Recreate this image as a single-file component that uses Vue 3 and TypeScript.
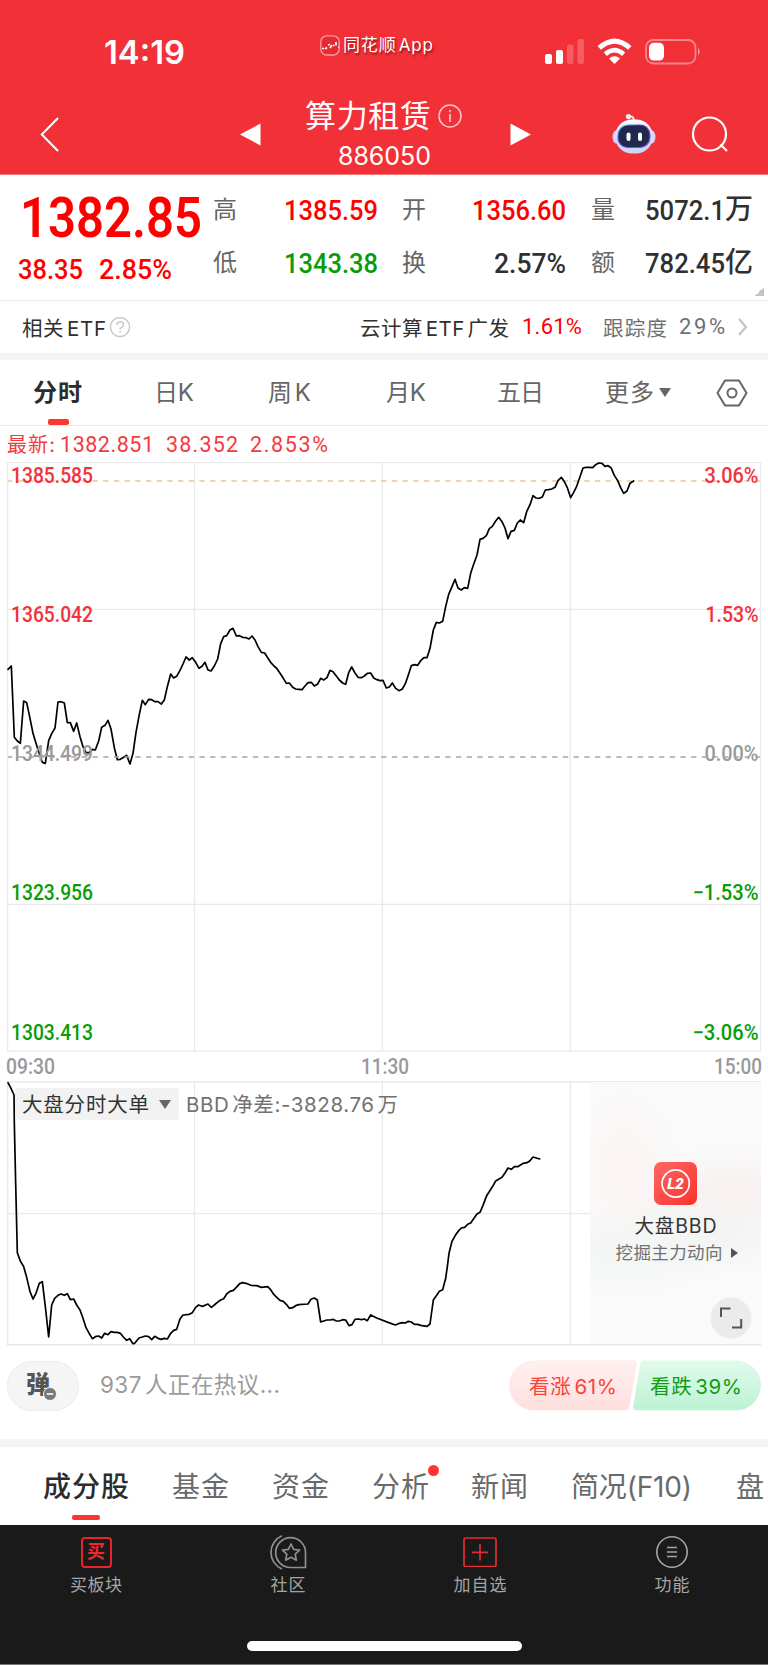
<script setup lang="ts">
type Point = [number, number]

/* Spreads a label's letters so that it takes up the given width in pixels. */
const vFit = {
  mounted(el: HTMLElement, binding: { value: number }) {
    const count = Array.from(el.textContent ?? '').length
    if (count < 2) return
    const natural = el.getBoundingClientRect().width
    const gap = (binding.value - natural) / (count - 1)
    el.style.letterSpacing = `${gap}px`
    el.style.marginRight = `${-gap}px`
  },
}

/* Condenses the glyphs of a figure to the given width in pixels. */
const vCondense = {
  mounted(el: HTMLElement, binding: { value: number }) {
    const natural = el.getBoundingClientRect().width
    el.style.transform = `scaleX(${binding.value / natural})`
    el.style.marginRight = `${binding.value - natural}px`
  },
}

/* Samples are stored as flat x,y lists on a grid three times finer than the plot. */
const toPoints = (flat: number[], dy: number): string => {
  const out: Point[] = []
  for (let i = 0; i < flat.length; i += 2) out.push([flat[i] / 3 - 7, flat[i + 1] / 3 + dy])
  return out.map(([x, y]) => `${x.toFixed(2)},${y.toFixed(2)}`).join(' ')
}

const price: number[] = [
  24,643,34,633,43,847,52,858,61,865,71,738,80,743,90,790,99,835,108,865,117,893,127,922,136,925,146,857,155,836,165,819,
  174,741,183,740,193,744,202,803,211,803,221,829,230,804,240,845,249,875,258,893,268,893,277,883,286,885,296,858,305,817,
  315,811,324,796,333,822,343,878,352,914,361,913,371,907,380,901,390,927,399,895,408,832,418,778,427,736,436,749,446,733,
  455,734,465,740,474,740,484,747,493,735,502,695,512,657,521,669,530,664,540,646,549,627,558,606,568,615,577,608,587,622,
  597,640,606,634,615,622,624,645,633,648,643,633,653,612,662,566,671,545,680,542,690,525,699,520,709,543,718,542,728,547,
  738,548,747,552,756,543,765,555,774,575,784,592,794,594,803,608,812,622,822,633,831,641,840,655,850,670,859,685,868,684,
  878,697,887,702,896,703,906,704,915,693,924,683,934,682,943,693,953,687,962,670,971,675,981,668,990,646,999,650,1009,663,
  1018,675,1028,684,1037,688,1046,653,1055,636,1065,654,1074,667,1084,668,1093,663,1102,655,1112,654,1121,669,1131,674,
  1140,677,1149,676,1159,699,1168,696,1177,684,1187,700,1197,707,1207,702,1216,686,1225,660,1234,632,1244,629,1253,631,
  1262,617,1272,608,1281,608,1290,580,1300,525,1309,502,1318,504,1328,499,1337,455,1346,418,1356,395,1365,373,1374,399,
  1384,405,1393,398,1403,400,1412,355,1421,328,1431,300,1440,253,1449,250,1459,242,1468,221,1477,214,1487,198,1496,187,
  1506,200,1515,219,1524,251,1533,229,1543,226,1552,204,1561,195,1571,203,1580,170,1590,149,1599,122,1608,129,1618,130,
  1627,126,1636,105,1646,104,1655,102,1665,97,1674,77,1684,67,1693,80,1702,98,1712,128,1721,112,1730,94,1740,65,1749,39,
  1758,37,1768,37,1778,38,1787,29,1796,24,1806,25,1815,34,1824,32,1833,38,1843,61,1853,77,1862,98,1871,115,1881,108,
  1890,85,1901,78,
]

const bigOrders: number[] = [
  24,8,33,25,42,45,43,130,47,310,52,518,61,543,71,560,80,592,90,635,99,657,108,640,118,610,127,605,136,680,146,771,155,675,
  164,655,174,646,183,642,193,646,202,641,211,659,221,657,230,675,240,690,249,715,258,743,268,761,277,776,286,770,296,768,
  305,774,314,760,324,764,333,755,343,757,352,757,361,760,370,771,380,781,389,776,399,791,404,790,417,774,427,771,436,768,
  446,770,455,779,464,769,474,775,483,778,493,775,502,777,512,760,521,751,530,748,540,717,549,705,568,703,577,698,587,682,
  596,675,606,679,615,676,624,672,634,682,643,675,652,667,662,660,671,656,680,642,690,634,700,631,709,622,719,611,728,608,
  738,610,753,616,770,617,784,622,803,620,812,629,822,644,831,653,840,661,850,664,859,673,868,685,878,683,887,677,896,674,
  924,672,933,658,943,654,952,660,962,726,971,723,981,720,990,720,999,718,1009,723,1018,723,1028,719,1037,720,1047,737,
  1056,734,1065,718,1075,717,1084,719,1093,717,1102,722,1112,705,1130,714,1140,718,1164,727,1186,735,1195,731,1207,728,
  1216,729,1225,724,1234,726,1243,733,1253,733,1262,736,1281,739,1290,732,1300,660,1309,647,1318,634,1328,629,1337,595,
  1342,560,1347,520,1356,484,1366,466,1376,452,1384,444,1394,442,1403,433,1412,429,1422,415,1431,402,1440,397,1449,376,
  1460,347,1469,333,1478,319,1487,303,1506,292,1515,279,1524,264,1534,268,1543,260,1553,260,1570,250,1581,248,1590,242,
  1599,231,1619,237,
]

const pricePoints = toPoints(price, -7)
const orderPoints = toPoints(bigOrders, -1)

const axis = [
  { value: '1385.585', pct: '3.06%', y: 20.5, w: 54, tone: 'up' },
  { value: '1365.042', pct: '1.53%', y: 159.9, w: 53, tone: 'up' },
  { value: '1344.499', pct: '0.00%', y: 299.1, w: 54, tone: 'flat' },
  { value: '1323.956', pct: '−1.53%', y: 438.3, w: 66, tone: 'down' },
  { value: '1303.413', pct: '−3.06%', y: 577.5, w: 66, tone: 'down' },
]

const periods = [
  { name: '日K', w: 40 },
  { name: '周K', w: 43 },
  { name: '月K', w: 40 },
  { name: '五日', w: 47 },
]
</script>

<template>
  <div class="screen">
    <header class="top">
      <div class="status">
        <span class="clock" v-condense="81">14:19</span>
        <div class="source">
          <svg width="20" height="21" viewBox="0 0 20 21">
            <rect x=".8" y=".8" width="18.4" height="19.2" rx="6" fill="#e22c33" stroke="#ff9a9d" stroke-width="1.3" />
            <path d="M2 13.500h2M5 14l2-1.500M8 10l2-.500M10 13l2-3M13 10.500h1.500M16 7v3.500M18 12h1" stroke="#fff" stroke-width="1.700" fill="none" />
          </svg>
          <span v-fit="90">同花顺 App</span>
        </div>
        <svg class="signals" width="158" height="28" viewBox="0 0 158 28" fill="#fff">
          <rect x="1" y="16" width="7" height="10" rx="2" />
          <rect x="12" y="12" width="7" height="14" rx="2" />
          <rect x="23" y="6.500" width="6.500" height="19.500" rx="2" opacity=".22" />
          <rect x="33.500" y="1" width="6.500" height="25" rx="2" opacity=".22" />
          <g fill="none" stroke="#fff" stroke-width="5">
            <path d="M55.200 9.900Q70.500-3.800 85.800 9.900" />
            <path d="M61.300 16.200Q70.500 8.200 79.700 16.200" stroke-width="4.600" />
          </g>
          <path d="M65 20.500Q70.500 16 76 20.500L70.500 26Z" />
          <rect x="102" y="2" width="49.500" height="23.500" rx="7.500" fill="none" stroke="#fff" stroke-opacity=".42" stroke-width="1.800" />
          <rect x="105" y="4.800" width="15" height="17.800" rx="5" />
          <path d="M154 10q3.500 3.700 0 7.500z" opacity=".5" />
        </svg>
      </div>
      <div class="nav">
        <svg width="20" height="37" viewBox="0 0 20 37"><path d="M18 2L1.800 18.500l16.200 16.500" fill="none" stroke="#fff" stroke-width="2" /></svg>
        <svg width="21" height="23" viewBox="0 0 21 23"><path d="M20.500 .5v22L0 11.500z" fill="#fff" /></svg>
        <div class="title">
          <div class="name">
            <span v-fit="126">算力租赁</span>
            <svg width="24" height="24" viewBox="0 0 24 24" opacity=".72">
              <circle cx="12" cy="12" r="11" fill="none" stroke="#fff" stroke-width="1.500" />
              <path d="M12 10v8M12 6v2.200" stroke="#fff" stroke-width="1.700" />
            </svg>
          </div>
          <span class="code" v-fit="93">886050</span>
        </div>
        <svg width="21" height="23" viewBox="0 0 21 23"><path d="M.5 .5v22L21 11.500z" fill="#fff" /></svg>
        <svg class="robot" width="44" height="41" viewBox="0 0 44 41">
          <defs>
            <linearGradient id="shell" x1="0" y1="0" x2="0" y2="1"><stop offset="0" stop-color="#fff" /><stop offset=".55" stop-color="#dcd9fa" /><stop offset="1" stop-color="#cbd5f2" /></linearGradient>
            <linearGradient id="rim" x1="0" y1="0" x2="1" y2="1"><stop offset="0" stop-color="#60d4f4" /><stop offset=".4" stop-color="#5635b8" /><stop offset="1" stop-color="#8c68f0" /></linearGradient>
          </defs>
          <path d="M17 3.500q5-1 5 5" fill="none" stroke="#f3e9fa" stroke-width="1.800" />
          <circle cx="16.500" cy="3.600" r="2.700" fill="#f4eafa" />
          <ellipse cx="4" cy="24" rx="3.500" ry="6.500" fill="#d6d0f2" />
          <ellipse cx="40" cy="24" rx="3.500" ry="6.500" fill="#d6d0f2" />
          <rect x="3" y="6.500" width="38" height="34" rx="17" fill="url(#shell)" />
          <rect x="6" y="12" width="32" height="22.500" rx="10" fill="#20294d" stroke="url(#rim)" stroke-width="1.200" />
          <rect x="14.500" y="19.500" width="4" height="8.500" rx="2" fill="#fff" />
          <rect x="26" y="19.500" width="4" height="8.500" rx="2" fill="#fff" />
        </svg>
        <svg width="38" height="38" viewBox="0 0 38 38"><circle cx="18.500" cy="18" r="16.500" fill="none" stroke="#fff" stroke-width="2.200" /><path d="M29.500 28.500l6.500 6.500" stroke="#fff" stroke-width="2.300" /></svg>
      </div>
    </header>

    <section class="quote">
      <div class="last">
        <div class="big"><span v-condense="182">1382.85</span></div>
        <div class="change"><span v-condense="65">38.35</span><span v-condense="73">2.85%</span></div>
      </div>
      <div class="stats">
        <span class="label">高</span><div class="num up"><span v-condense="94">1385.59</span></div>
        <span class="label">开</span><div class="num up"><span v-condense="94">1356.60</span></div>
        <span class="label">量</span><div class="num"><span v-condense="80">5072.1</span><i>万</i></div>
        <span class="label">低</span><div class="num down"><span v-condense="94">1343.38</span></div>
        <span class="label">换</span><div class="num"><span v-condense="72">2.57%</span></div>
        <span class="label">额</span><div class="num"><span v-condense="80">782.45</span><i>亿</i></div>
      </div>
      <i class="corner"></i>
    </section>

    <section class="etf">
      <span v-fit="84">相关 ETF</span>
      <svg width="22" height="22" viewBox="0 0 22 22" fill="none" stroke="#c9c9c9" stroke-width="1.500">
        <circle cx="11" cy="11" r="9.600" /><path d="M8 9q0-3.200 3.200-3.200t3.200 2.900q0 1.800-1.800 2.700-1.500.8-1.500 2.200M11.100 15v1.700" />
      </svg>
      <div class="fund">
        <span v-fit="149">云计算 ETF 广发</span>
        <span class="rise digits" v-fit="60">1.61%</span>
        <span class="grey" v-fit="64">跟踪度</span>
        <span class="grey pct digits" v-fit="46">29%</span>
        <svg width="10" height="18" viewBox="0 0 10 18"><path d="M1 1l7 8-7 8" fill="none" stroke="#c4c4c4" stroke-width="2.200" /></svg>
      </div>
    </section>

    <nav class="periods">
      <div class="active"><span v-fit="49">分时</span></div>
      <div v-for="p in periods" :key="p.name"><span v-fit="p.w">{{ p.name }}</span></div>
      <div class="more"><span v-fit="49">更多</span><i class="caret"></i></div>
      <svg width="32" height="28" viewBox="0 0 32 28" fill="none" stroke="#666" stroke-width="2"><path d="M9 1.500h14L30.500 14 23 26.500H9L1.500 14z" stroke-linejoin="round" /><circle cx="16" cy="14" r="4.500" /></svg>
    </nav>

    <div class="latest">
      <span class="caption" v-fit="48">最新:</span><span v-fit="94">1382.851</span><span v-fit="72">38.352</span><span v-fit="78">2.853%</span>
    </div>

    <svg class="plot" width="754" height="590" viewBox="0 0 754 590">
      <g fill="none" stroke="#e9e9e9" stroke-width="1.300">
        <rect x=".6" y=".6" width="753" height="588.500" />
        <path d="M187.500 0v589M375.300 0v589M563.300 0v589M0 147.400h753M0 442.300h753" />
      </g>
      <path d="M1 19h752" stroke="#e8c79a" stroke-dasharray="5.300 5.390" stroke-dashoffset="1" stroke-width="1.300" />
      <polyline :points="pricePoints" class="line" />
      <g v-for="a in axis" :key="a.value" :class="['axis', a.tone]">
        <text x="4" :y="a.y" textLength="82" lengthAdjust="spacingAndGlyphs">{{ a.value }}</text>
        <text :x="751.500 - a.w" :y="a.y" :textLength="a.w" lengthAdjust="spacingAndGlyphs">{{ a.pct }}</text>
      </g>
      <path d="M1 295h752" stroke="#a5a5a5" stroke-dasharray="5.300 5.390" stroke-dashoffset="1" stroke-width="1.500" />
    </svg>

    <div class="times"><span v-condense="49">09:30</span><span v-condense="48">11:30</span><span v-condense="48">15:00</span></div>

    <section class="orders">
      <svg class="orders-plot" width="754" height="265" viewBox="0 0 754 265">
        <g fill="none" stroke="#e9e9e9" stroke-width="1.300">
          <rect x=".6" y=".8" width="753" height="263" stroke-width="1.600" />
          <path d="M187.500 0v264M375.300 0v264M563.300 0v264M0 132.600h583" />
        </g>
        <polyline :points="orderPoints" class="line" />
      </svg>
      <div class="orders-body">
        <div class="legend">
          <div class="chip"><span v-fit="127">大盘分时大单</span><i class="caret"></i></div>
          <span class="net" v-fit="212">BBD 净差:-3828.76 万</span>
        </div>
        <aside class="promo">
          <svg class="badge" width="43" height="43" viewBox="0 0 43 43">
            <defs><linearGradient id="l2" x1="0" y1="0" x2="1" y2="1"><stop offset="0" stop-color="#ff6865" /><stop offset="1" stop-color="#fa322d" /></linearGradient></defs>
            <rect width="43" height="43" rx="7" fill="url(#l2)" />
            <circle cx="21.700" cy="21.500" r="13.600" fill="none" stroke="#fff" stroke-width="1.700" />
            <text x="13.200" y="27" textLength="16.500" lengthAdjust="spacingAndGlyphs" class="l2">L2</text>
          </svg>
          <span class="promo-name" v-fit="82">大盘BBD</span>
          <div class="promo-link"><span v-fit="107">挖掘主力动向</span><i></i></div>
          <svg class="expand" width="42" height="42" viewBox="0 0 42 42"><circle cx="21" cy="21" r="20.500" fill="#ebebeb" /><path d="M11 20v-8.500h9.500M22 30.500h9.200V22" fill="none" stroke="#555" stroke-width="2" /></svg>
        </aside>
      </div>
    </section>

    <section class="talk">
      <div class="danmu">
        <b>弹</b>
        <svg width="14" height="14" viewBox="0 0 14 14"><circle cx="7" cy="7" r="6.500" fill="#777" stroke="#f5f5f5" /><path d="M3.800 7h6.400" stroke="#fff" stroke-width="1.600" /></svg>
      </div>
      <span class="count" v-fit="180">937 人正在热议...</span>
      <div class="votes">
        <svg width="252" height="51" viewBox="0 0 252 51">
          <defs>
            <linearGradient id="bull" x1="0" y1="0" x2="0" y2="1"><stop offset="0" stop-color="#fff0ef" /><stop offset="1" stop-color="#fedfdd" /></linearGradient>
            <linearGradient id="bear" x1="0" y1="0" x2="0" y2="1"><stop offset="0" stop-color="#e1faec" /><stop offset="1" stop-color="#bdf2d4" /></linearGradient>
          </defs>
          <path d="M25 .5H125q3.500 0 3 3.500L120.500 46q-.8 4.300-4.500 4.300H25A24.900 24.900 0 0 1 25 .5z" fill="url(#bull)" />
          <path d="M136 .5H227A24.900 24.900 0 0 1 227 50.300H127.500q-4 0-3.300-4L131 5q.8-4.500 5-4.500z" fill="url(#bear)" />
        </svg>
        <div class="vote-text"><span class="bull" v-fit="88">看涨 61%</span><span class="bear" v-fit="92">看跌 39%</span></div>
      </div>
    </section>

    <nav class="sections">
      <div class="active"><span v-fit="86">成分股</span></div>
      <div><span v-fit="57">基金</span></div>
      <div><span v-fit="57">资金</span></div>
      <div class="dot"><span v-fit="57">分析</span></div>
      <div><span v-fit="57">新闻</span></div>
      <div><span v-fit="121">简况(F10)</span></div>
      <div>盘</div>
    </nav>

    <footer class="bottom">
      <div class="actions">
        <div>
          <div class="buy">买</div>
          <span v-fit="52">买板块</span>
        </div>
        <div>
          <svg width="37" height="35" viewBox="0 0 37 35" fill="none" stroke="#8f8f8f" stroke-width="1.700">
            <path d="M12 .8A18 18 0 0 0 12 34" />
            <path d="M35.500 32.500H21A14.900 14.900 0 1 1 35.500 17.600z" />
            <path d="M21 9l2.600 5.400 6 .7-4.400 4.100 1.100 6L21 22.300l-5.300 2.900 1.100-6-4.400-4.100 6-.7z" stroke-linejoin="round" />
          </svg>
          <span v-fit="35">社区</span>
        </div>
        <div>
          <svg width="34" height="30" viewBox="0 0 34 30" fill="none" stroke="#e52d30" stroke-width="1.700"><rect x="1" y="1" width="32" height="28.500" rx="1.500" /><path d="M17 7v16.500M9 15.300h16" /></svg>
          <span v-fit="53">加自选</span>
        </div>
        <div>
          <svg width="32" height="32" viewBox="0 0 32 32" fill="none" stroke="#a5a5a5" stroke-width="1.600"><circle cx="16" cy="16" r="15.200" /><path d="M11 11.500h10M11 16h10M11 20.500h10" /></svg>
          <span v-fit="35">功能</span>
        </div>
      </div>
      <i class="home"></i>
    </footer>
  </div>
</template>

<style>
body { background: #fff; }
</style>

<style scoped>
.screen {
  width: 768px;
  height: 1665px;
  overflow: hidden;
  background: #fff;
  color: #303030;
  font-family: Inter, "Noto Sans CJK SC", sans-serif;
}
.screen * { box-sizing: border-box; }
.screen span { display: inline-block; white-space: pre; flex: none; transform-origin: 0 50%; word-spacing: -3.500px; }
svg { display: block; flex: none; }
i { font-style: normal; }

.top { height: 175px; background: #f23038; color: #fff; border-bottom: 1px solid #f7777b; }
.status { height: 98px; display: grid; grid-template-columns: 320px 224px 1fr; padding-top: 33px; align-items: start; }
.clock { font-size: 32px; line-height: 40px; font-weight: 600; margin-left: 104px; justify-self: start; }
.source { display: flex; align-items: center; gap: 3px; font-size: 17px; line-height: 22px; text-shadow: 1px 2px 2px rgba(90, 0, 0, .65); margin-top: 1px; }
.signals { margin-top: 5px; }
.nav { display: grid; grid-template-columns: 200px 66px 204px 102px 79px 38px; padding-left: 40px; align-items: start; }
.nav > svg:nth-child(1) { margin-top: 18px; }
.nav > svg:nth-child(2) { margin-top: 25px; }
.nav > svg:nth-child(4) { margin-top: 25px; }
.nav > svg:last-child { margin-top: 18px; }
.robot { margin-top: 15px; }
.name { display: flex; align-items: center; gap: 7px; font-size: 31px; line-height: 36px; margin-left: -1px; }
.code { font-size: 25px; line-height: 24px; margin: 10px 0 0 32px; }

.quote { height: 125px; display: flex; position: relative; font-family: Roboto, "Noto Sans CJK SC", sans-serif; }
.last { width: 213px; color: #fe0000; font-weight: 500; }
.big { height: 86px; line-height: 87px; font-size: 56px; padding-left: 20px; font-weight: 600; }
.change { font-size: 28px; line-height: 18px; height: 18px; display: flex; gap: 16px; padding-left: 18px; }
.stats { display: grid; grid-template-columns: 24px 142px 47px 141px 48px 139px; grid-template-rows: 53px 53px; padding-top: 9px; align-items: center; }
.stats .label { font-size: 24px; color: #666; line-height: 53px; text-align: right; }
.num { display: flex; justify-content: flex-end; font-size: 28px; font-weight: 500; line-height: 53px; padding-right: 1px; }
.num i { font-size: 28px; width: 28px; line-height: 51px; }
.up { color: #fe0000; }
.down { color: #089c08; }
.corner { position: absolute; right: 4px; bottom: 4px; width: 9px; height: 9px; background: linear-gradient(135deg, transparent 50%, #c4c4c4 50%); }

.etf { height: 53px; border-top: 1px solid #e9e9e9; display: flex; align-items: center; padding: 0 20px 1px 22px; font-size: 20.500px; gap: 3px; }
.digits { font-family: Roboto, sans-serif; font-size: 22px; }
.fund { flex: 1; display: flex; align-items: center; justify-content: flex-end; }
.rise { color: #fe0000; margin-left: 13px; }
.grey { color: #707070; margin-left: 21px; }
.pct { margin-left: 12px; }
.fund svg { margin-left: 13px; }

.periods { height: 73px; border-top: 7px solid #f4f4f4; border-bottom: 1px solid #ececec; display: grid; grid-template-columns: 121px 114px 118px 111px 108px 111px 32px; padding-left: 33px; align-items: center; font-size: 24px; line-height: 65px; color: #666; }
.periods > div { position: relative; height: 65px; }
.periods .active, .sections .active { color: #2c2c2c; font-weight: 600; }
.periods .active::after { content: ""; position: absolute; left: 15px; bottom: 0; width: 21px; height: 6px; border-radius: 2px; background: #fd3730; }
.more { display: flex; align-items: center; gap: 5px; }
.caret { border: 6px solid transparent; border-top: 9px solid #666; border-bottom: 0; }

.latest { height: 36px; display: flex; padding-left: 7px; line-height: 38px; font-family: Roboto, sans-serif; font-size: 21.500px; color: #f23a40; }
.latest .caption { font-family: Inter, "Noto Sans CJK SC", sans-serif; font-size: 20px; }
.latest span:nth-child(2) { margin-left: 5px; }
.latest span:nth-child(3), .latest span:nth-child(4) { margin-left: 12px; }

.plot { margin-left: 7px; }
.line { fill: none; stroke: #000; stroke-width: 1.700; stroke-linejoin: round; stroke-linecap: round; }
.axis { font: 500 21.500px Roboto, sans-serif; }
.axis.up { fill: #f3323a; }
.axis.flat { fill: #999; }
.axis.down { fill: #089c08; }
.times { height: 29px; display: flex; justify-content: space-between; padding: 0 6px; font: 500 21.500px/29px Roboto, sans-serif; color: #999; }

.orders { height: 265px; margin-left: 7px; width: 754px; display: grid; }
.orders-plot, .orders-body { grid-area: 1 / 1; }
.orders-body { display: flex; justify-content: space-between; }
.legend { display: flex; align-items: flex-start; padding: 7px 0 0 8px; font-size: 20.500px; line-height: 33px; gap: 7px; }
.chip { width: 164px; height: 32px; display: flex; align-items: center; justify-content: space-between; padding: 0 8px 0 7px; background: rgba(241, 241, 241, .9); border-radius: 3px; color: #333; }
.net { color: #727272; }
.promo {
  width: 171px; height: 262px; margin: 1px 0 0; display: flex; flex-direction: column; align-items: center; padding-top: 80px;
  background: radial-gradient(ellipse 60px 85px at 20% 33%, #fcf4f4, transparent), radial-gradient(ellipse 150px 50px at 90% 42%, #f7f0f0, transparent), radial-gradient(ellipse 105px 55px at 20% 64%, #f2f6f4, transparent), radial-gradient(ellipse 140px 46px at 70% 58%, #f1f4f3, transparent), #fafafa;
}
.promo-name { font-size: 19.500px; line-height: 24px; margin-top: 9px; color: #333; }
.promo-link { display: flex; align-items: center; font-size: 17.500px; line-height: 24px; color: #707070; margin-top: 3px; gap: 8px; margin-left: 2px; }
.promo-link i { border: 5px solid transparent; border-left: 7px solid #555; border-right: 0; }
.promo .expand { align-self: flex-end; margin: 32px 9px 0 0; }
.l2 { font: italic 900 15px Roboto, sans-serif; fill: #fff; }

.talk { height: 93px; display: flex; padding: 14px 7px 28px; align-items: center; }
.danmu { width: 72px; height: 50px; border: 1px solid #ececec; border-radius: 25px; background: #f5f5f5; display: flex; align-items: center; padding-left: 18px; color: #555; }
.danmu b { font-size: 24px; font-weight: 900; line-height: 49px; height: 51px; }
.danmu svg { margin: 16px 0 0 -7px; }
.count { font-size: 22.500px; line-height: 30px; color: #9a9a9a; margin: -2px 0 0 21px; }
.votes { margin-left: auto; display: grid; }
.votes > * { grid-area: 1 / 1; }
.vote-text { display: flex; align-items: center; gap: 33px; padding: 0 0 2px 20px; font-size: 20.500px; }
.bull { color: #fb433d; }
.bear { color: #109d14; }

.sections { height: 86px; border-top: 8px solid #f4f4f4; display: grid; grid-template-columns: 129px 100px 100px 99px 100px 165px 40px; padding-left: 43px; font-size: 28px; line-height: 80px; color: #6a6a6a; }
.sections > div { position: relative; height: 78px; white-space: nowrap; }
.sections .active { font-weight: 500; }
.sections .active::after { content: ""; position: absolute; left: 29px; bottom: 5px; width: 28px; height: 5px; border-radius: 2px; background: #fd3730; }
.dot::after { content: ""; position: absolute; left: 56px; top: 18px; width: 11px; height: 11px; border-radius: 50%; background: #fd3730; }

.bottom { height: 140px; background: #1a1a1a; border-bottom: 1px solid #777; color: #a5a5a5; display: flex; flex-direction: column; align-items: center; }
.actions { align-self: stretch; display: grid; grid-template-columns: repeat(4, 1fr); height: 116px; padding-top: 9px; font-size: 17px; line-height: 22px; }
.actions > div { display: grid; grid-template-rows: 36px 28px; justify-items: center; align-items: center; }
.actions span { margin-top: 2px; }
.buy { width: 31px; height: 31px; border: 2px solid #e8242a; border-radius: 4px; color: #f0272d; font-size: 18px; font-weight: 700; line-height: 26px; text-align: center; }
.home { width: 275px; height: 10px; border-radius: 5px; background: #fff; }
</style>
